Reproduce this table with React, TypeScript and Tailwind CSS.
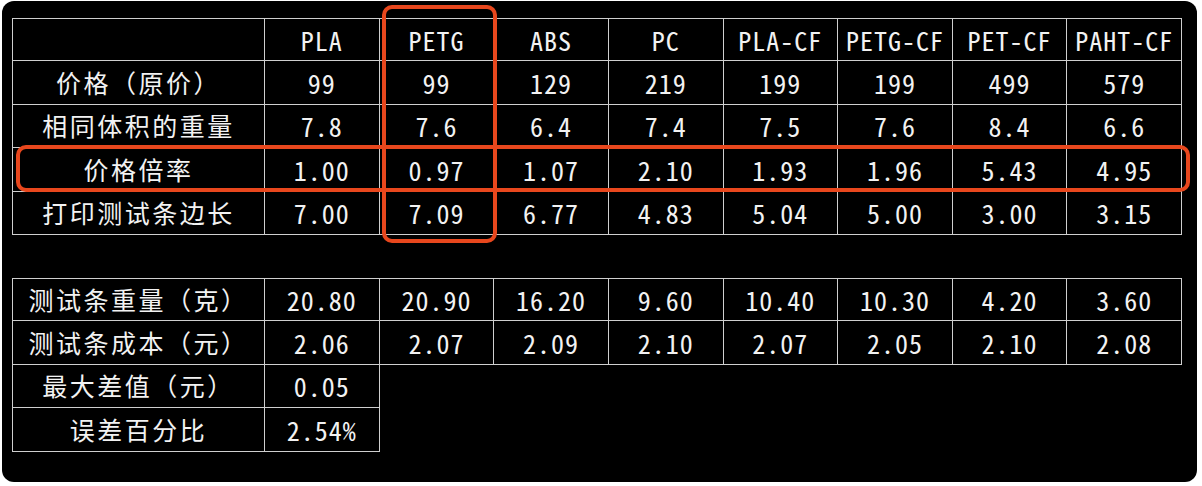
const cols = ["PLA", "PETG", "ABS", "PC", "PLA-CF", "PETG-CF", "PET-CF", "PAHT-CF"];

const top: { label: string; values: string[] }[] = [
  { label: "价格（原价）", values: ["99", "99", "129", "219", "199", "199", "499", "579"] },
  { label: "相同体积的重量", values: ["7.8", "7.6", "6.4", "7.4", "7.5", "7.6", "8.4", "6.6"] },
  { label: "价格倍率", values: ["1.00", "0.97", "1.07", "2.10", "1.93", "1.96", "5.43", "4.95"] },
  { label: "打印测试条边长", values: ["7.00", "7.09", "6.77", "4.83", "5.04", "5.00", "3.00", "3.15"] },
];

const bottom: { label: string; values: string[] }[] = [
  { label: "测试条重量（克）", values: ["20.80", "20.90", "16.20", "9.60", "10.40", "10.30", "4.20", "3.60"] },
  { label: "测试条成本（元）", values: ["2.06", "2.07", "2.09", "2.10", "2.07", "2.05", "2.10", "2.08"] },
  { label: "最大差值（元）", values: ["0.05"] },
  { label: "误差百分比", values: ["2.54%"] },
];

const labelFont = "font-['Noto_Sans_CJK_SC',sans-serif] text-[25px] tracking-[2.5px]";
const valueFont =
  "font-['Noto_Sans_Mono_CJK_SC','Noto_Sans_CJK_SC',monospace] text-[26px] tracking-[1px]";

function Cell({ children, label, first, topRow }: { children?: string; label?: boolean; first?: boolean; topRow?: boolean }) {
  return (
    <div
      className={`flex h-[43.4px] items-center justify-center border-b border-r border-[#cfcfcf] text-[#f2f2f2] ${
        first ? "border-l" : ""
      } ${topRow ? "border-t" : ""} ${label ? labelFont : valueFont}`}
    >
      {children}
    </div>
  );
}

export default function App() {
  return (
    <div className="h-[486px] w-[1202px] bg-white pl-[2px] pt-[1px]">
      <div className="relative h-[481px] w-[1195px] rounded-[12px] bg-black pl-[10px] pt-[17px]">
        <div className="grid w-[1170px] grid-cols-[253px_repeat(8,1fr)]">
          <Cell first topRow label />
          {cols.map((c) => (
            <Cell key={c} topRow>
              {c}
            </Cell>
          ))}
          {top.map((row) => (
            <div key={row.label} className="contents">
              <Cell first label>
                {row.label}
              </Cell>
              {row.values.map((v, i) => (
                <Cell key={i}>{v}</Cell>
              ))}
            </div>
          ))}
        </div>

        <div className="mt-[43px] grid w-[1170px] grid-cols-[253px_repeat(8,1fr)]">
          {bottom.map((row, r) => (
            <div key={row.label} className="contents">
              <Cell first topRow={r === 0} label>
                {row.label}
              </Cell>
              {row.values.map((v, i) => (
                <Cell key={i} topRow={r === 0}>
                  {v}
                </Cell>
              ))}
              {row.values.length < 8 ? <div className="col-span-7" /> : null}
            </div>
          ))}
        </div>

        {/* highlight boxes */}
        <div className="pointer-events-none absolute left-[380px] top-[4px] h-[238px] w-[115px] rounded-[10px] border-[4px] border-[#e8471d]" />
        <div className="pointer-events-none absolute left-[14px] top-[144px] h-[47px] w-[1174px] rounded-[10px] border-[4px] border-[#e8471d]" />
      </div>
    </div>
  );
}
